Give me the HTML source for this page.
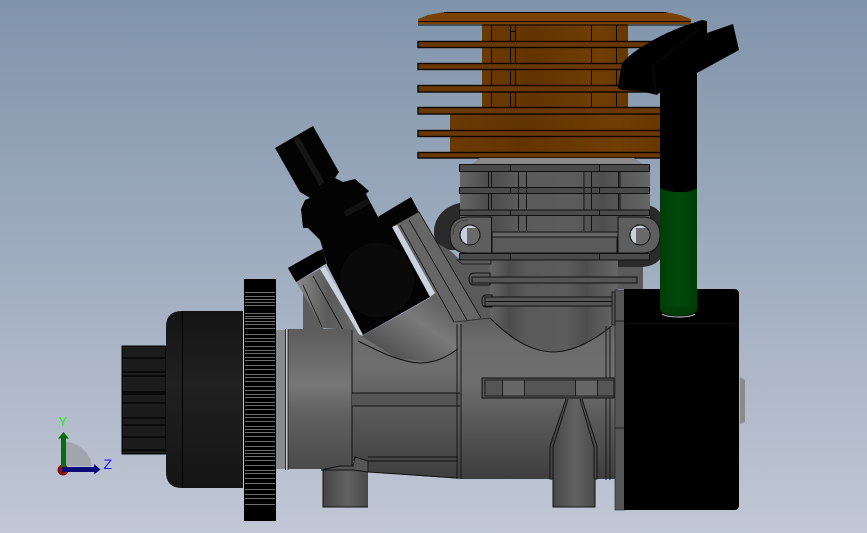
<!DOCTYPE html>
<html><head><meta charset="utf-8"><style>html,body{margin:0;padding:0;background:#a0abbd}svg{display:block}text{font-family:"Liberation Sans",sans-serif}</style></head><body>
<svg width="867" height="533" viewBox="0 0 867 533" xmlns="http://www.w3.org/2000/svg">
<defs>
<linearGradient id="bg" x1="0" y1="0" x2="0" y2="1"><stop offset="0" stop-color="#8094ab"/><stop offset="1" stop-color="#c1c7d5"/></linearGradient>
<linearGradient id="cu" x1="0" y1="0" x2="1" y2="0"><stop offset="0" stop-color="#6a3a03"/><stop offset=".35" stop-color="#623400"/><stop offset=".8" stop-color="#703e05"/><stop offset="1" stop-color="#673701"/></linearGradient>
<linearGradient id="body" x1="0" y1="0" x2="0" y2="1"><stop offset="0" stop-color="#5e5e5e"/><stop offset=".15" stop-color="#6c6c6c"/><stop offset=".4" stop-color="#6e6e6e"/><stop offset=".6" stop-color="#5c5c5c"/><stop offset="1" stop-color="#3e3e3e"/></linearGradient>
<linearGradient id="nose" x1="0" y1="0" x2="0" y2="1"><stop offset="0" stop-color="#5c5c5c"/><stop offset=".4" stop-color="#777"/><stop offset=".6" stop-color="#616161"/><stop offset="1" stop-color="#4a4a4a"/></linearGradient>
<linearGradient id="head" x1="0" y1="0" x2="1" y2="0"><stop offset="0" stop-color="#666"/><stop offset=".15" stop-color="#4c4c4c"/><stop offset=".3" stop-color="#5a5a5a"/><stop offset=".6" stop-color="#5c5c5c"/><stop offset=".75" stop-color="#4e4e4e"/><stop offset="1" stop-color="#666"/></linearGradient>
<linearGradient id="mount" x1="0" y1="0" x2="1" y2="0"><stop offset="0" stop-color="#444"/><stop offset=".55" stop-color="#626262"/><stop offset="1" stop-color="#484848"/></linearGradient>
<linearGradient id="clutch" x1="0" y1="0" x2="0" y2="1"><stop offset="0" stop-color="#141414"/><stop offset=".4" stop-color="#202020"/><stop offset="1" stop-color="#151515"/></linearGradient>
<linearGradient id="leg" x1="0" y1="0" x2="1" y2="0"><stop offset="0" stop-color="#8a8a8a"/><stop offset=".5" stop-color="#5a5a5a"/><stop offset="1" stop-color="#6a6a6a"/></linearGradient>
<linearGradient id="trump" x1="0" y1="1" x2="1" y2="0"><stop offset="0" stop-color="#404040"/><stop offset=".6" stop-color="#7a7a7a"/><stop offset="1" stop-color="#555"/></linearGradient>
<linearGradient id="green" x1="0" y1="0" x2="1" y2="0"><stop offset="0" stop-color="#003d06"/><stop offset=".5" stop-color="#004a0a"/><stop offset="1" stop-color="#003d06"/></linearGradient>
<clipPath id="h1"><circle cx="470" cy="235" r="10"/></clipPath>
<clipPath id="h2"><circle cx="640" cy="235" r="10"/></clipPath>
</defs>
<rect width="867" height="533" fill="url(#bg)"/>

<!-- copper cylinder -->
<rect x="482" y="24" width="146" height="84" fill="url(#cu)"/>
<rect x="450" y="113" width="210" height="41" fill="url(#cu)"/>
<path d="M418 24V19L428 15 444 12H666L680 15 691 19V24Z" fill="#7a4204"/>
<g fill="none" stroke="#0a0500" stroke-width="1"><path d="M444 12.500H666M418 21.500H691M418 25H691"/></g>
<g fill="#6a3802" stroke="#0a0500" stroke-width="1.400">
<rect x="418" y="41.500" width="250" height="6"/>
<rect x="418" y="63.500" width="250" height="6"/>
<rect x="418" y="85.500" width="250" height="6.500"/>
<rect x="418" y="107.500" width="250" height="6.500"/>
<rect x="418" y="130.500" width="250" height="6"/>
<rect x="418" y="152.500" width="250" height="5.500"/>
</g>
<g stroke="#0a0500" stroke-width="1"><path d="M491.500 25V41M491.500 48V63M491.500 70V85M491.500 92V107M510.500 25V41M510.500 48V63M510.500 70V85M510.500 92V107M515.500 25V41M515.500 48V63M515.500 70V85M515.500 92V107M510 31.500H515M591.500 25V41M591.500 48V63M591.500 70V85M591.500 92V107M616.500 25V41M616.500 48V63M616.500 70V85M616.500 92V107"/></g>

<!-- head transition -->
<path d="M470 165L480 158H634L644 165Z" fill="#8a8a8a"/>

<!-- dark arcs behind ears -->
<path d="M460 203C444 206 434 218 434 232 434 240 436 246 440 250H460Z" fill="#2a2a2a"/>
<path d="M640 204C652 204 660 210 662 216V255C660 262 652 267 640 267H618V255Z" fill="#2a2a2a"/>

<!-- grey behind, between carb leg and crankcase -->
<path d="M425 232L437 243 452 252 462 262H492V326H482Z" fill="#5a5a5a"/>

<!-- crankcase upper -->
<rect x="615" y="267" width="28" height="22" fill="#5a5a5a"/>
<rect x="490" y="258" width="128" height="100" fill="url(#head)"/>

<!-- head block -->
<rect x="460" y="165" width="190" height="95" fill="url(#head)"/>
<g fill="#4a4a4a" stroke="#111" stroke-width="1"><rect x="459.500" y="164.500" width="190" height="7"/><rect x="459.500" y="187.500" width="190" height="6"/><rect x="459.500" y="210" width="190" height="5.500"/><rect x="459.500" y="253.500" width="190" height="6.500"/></g>
<path d="M491.500 172V187M491.500 194V210M488.500 172V187M488.500 194V210M518.500 172V210M526.500 172V210M518.500 216V231M526.500 216V231M584 172V210M591.500 172V210M584 216V231M591.500 216V231M618.500 172V187M618.500 194V210M620 172V187M620 194V210M510.500 164V171M510.500 187V193M510.500 210V215M510.500 253V260M599.500 164V171M599.500 187V193M599.500 210V215M599.500 253V260" stroke="#111" stroke-width="1"/>
<path d="M492 232H618V237H492Z" fill="#666" stroke="#111"/>
<rect x="492" y="237" width="125" height="16" fill="#5a5a5a" stroke="#111"/>

<!-- ears -->
<path d="M468 217H491.500V253H468Q450 253 450 235 450 217 468 217Z" fill="#5e5e5e" stroke="#111"/>
<path d="M453 235Q453 220 468 220" fill="none" stroke="#222" stroke-width=".6"/>
<path d="M618 217H642Q660 217 660 235 660 253 642 253H618Z" fill="#5e5e5e" stroke="#111"/>
<circle cx="470" cy="235" r="10" fill="#c8d0dc" stroke="#111"/>
<rect x="467" y="228" width="14" height="18" fill="#6a6a6a" clip-path="url(#h1)"/>
<circle cx="640" cy="235" r="10" fill="#c8d0dc" stroke="#111"/>
<rect x="636" y="228" width="15" height="18" fill="#6a6a6a" clip-path="url(#h2)"/>
<circle cx="470" cy="235" r="10" fill="none" stroke="#111"/>
<circle cx="640" cy="235" r="10" fill="none" stroke="#111"/>

<!-- collar below head -->
<path d="M457 260H491V264H462Z" fill="#5a5a5a" stroke="#111" stroke-width=".8"/>

<!-- screws -->
<path d="M490 273H474Q469 273 469 279 469 285 474 285H490Z" fill="#5a5a5a" stroke="#111"/>
<rect x="472" y="277" width="165" height="6" fill="#555" stroke="#111"/>
<path d="M492 295H486Q482 295 482 301 482 307 486 307H492Z" fill="#5a5a5a" stroke="#111"/>
<rect x="485" y="297" width="130" height="9" fill="#555" stroke="#111"/>
<path d="M485 301.500H615" stroke="#111"/>

<!-- left tube behind -->
<path d="M303 293V330H324L312 300Z" fill="#5c5c5c"/>

<!-- carb legs -->
<path d="M296 282L320 269 360 335 351 330 322 328 303 293Z" fill="url(#leg)"/>
<path d="M303 285L322 327M313 276L343 330" stroke="#111" stroke-width=".8" fill="none"/>
<path d="M320 269L325 267 364 333 360 336Z" fill="#c9d2de"/>
<path d="M392 227L419 212 481 318 453 326 430 297Z" fill="#666"/>
<path d="M400 225L454 322M409 220L467 320M419 212L481 318" stroke="#111" stroke-width=".8" fill="none"/>
<path d="M392 227L397 225 435 293 430 297Z" fill="#c9d2de"/>

<!-- body sections -->
<rect x="276" y="330" width="10" height="139" fill="#8a8a8a"/>
<rect x="286" y="329" width="2" height="140" fill="#c8ccd4"/>
<rect x="288" y="329" width="65" height="140" fill="url(#nose)"/>
<path d="M285.500 329V470M288 329V470" stroke="#111" stroke-width=".8"/>
<path d="M351 329L362 336 435 296 453 323 462 322V479L368 472 352 460Z" fill="url(#body)"/>
<path d="M362 336L435 295 455 328 458 348 430 362 396 358Z" fill="url(#trump)"/>
<path d="M358 341C380 352 400 362 420 363 436 363 448 356 458 349" fill="none" stroke="#111" stroke-width="1"/>
<path d="M352 330V470M368 457H458M368 461H458M368 472L458 478" stroke="#111" stroke-width="1" fill="none"/>
<rect x="352" y="393" width="108" height="13" fill="#555"/>
<path d="M352 393H460M352 406H460" stroke="#111"/>

<path d="M460 322L490 318C510 340 530 352 552 352 574 352 594 340 612 326H620V479H460Z" fill="url(#body)"/>
<path d="M490 318C510 338 530 351 552 352 574 352 594 340 612 326" fill="none" stroke="#111" stroke-width="1"/>
<path d="M455 322L490 318" stroke="#333" stroke-width="1"/>
<path d="M457 324V479M461 324V479M610 326V480M606 326V480" fill="none" stroke="#111" stroke-width=".9"/>

<!-- side rail -->
<rect x="482" y="378" width="132" height="20" fill="#555" stroke="#111"/>
<rect x="503" y="380" width="21" height="16" fill="#666"/><rect x="576" y="380" width="21" height="16" fill="#666"/>
<path d="M485 380H614V396H485ZM502.500 380V396M524.500 380V396M575.500 380V396M597.500 380V396" fill="none" stroke="#111" stroke-width=".8"/>

<!-- mounts -->
<rect x="323" y="469" width="45" height="38" fill="url(#mount)"/>
<path d="M323 470V507H368" fill="none" stroke="#111" stroke-width="1"/>
<path d="M321 470L340 466 353 466 355 457 368 461V472L353 470 323 470Z" fill="#555" stroke="#111" stroke-width=".9"/>
<path d="M566 399H582L597 447V479H595V507H553V479H550V447Z" fill="url(#mount)"/>
<path d="M566 399L550 446V479H553V507H595V479H597V446L582 399M568 399L553 447V479M580 399L594 447V479" fill="none" stroke="#111" stroke-width="1"/>

<!-- back plate and cover -->
<rect x="615" y="290" width="10" height="220" fill="#555" stroke="#222" stroke-width=".6"/>
<path d="M615 321H624M615 428H624" stroke="#111" stroke-width=".8"/>
<path d="M612 292H615V325H612Z" fill="#555" stroke="#111" stroke-width=".8"/>
<path d="M624 289H734Q739 289 739 294V505Q739 510 734 510H624Z" fill="#000"/>
<path d="M626 323.500H735" stroke="#0e0e0e" stroke-width="1"/>
<path d="M740 377L745 380V422L740 424Z" fill="#8a8a8a"/>

<!-- pipe -->
<rect x="660" y="180" width="37" height="130" fill="url(#green)"/>
<path d="M660 310C664 318 693 318 697 310V307H660Z" fill="#003d06"/>
<path d="M662 314C668 318 690 318 695 314" stroke="#c9ced8" stroke-width="1" fill="none"/>
<path d="M660 60H697V188C690 194 668 193 660 188Z" fill="#000"/>
<path d="M622 63C632 52 642 47 650 42 665 33 680 27 702 20L707 21 707 33 733 24 739 50 697 73 659 93 657 95 640 91 622 90 618 88 619 80Z" fill="#000"/>
<path d="M653 66L700 28M653 66L656 93" stroke="#0e0e0e" stroke-width="1" fill="none"/>

<!-- carb black -->
<path d="M275 148L313 126 339 172 335 178 343 182 355 179 369 191 366 194 378 217 381 215 411 197 419 212 392 227 430 297 363 335 327 265 323 249 318 251 288 268 296 282 327 263 320 240 308 228 303 228 301 209 305 200 310 198 300 192Z" fill="#030303"/>
<path d="M288 268L318 251 327 263 296 282Z" fill="#000"/>
<path d="M296 138L322 184" stroke="#161616" stroke-width="6"/>
<path d="M345 214L369 201" stroke="#111" stroke-width="6"/>
<circle cx="377" cy="280" r="37" fill="#0a0a0a"/>

<!-- clutch -->
<path d="M122 346H166V454H122Z" fill="#1c1c1c" stroke="#000"/>
<path d="M122 358H166M122 372H166M122 376H166M122 392H166M122 394H166M122 403H166M122 418H166M122 425H166M122 437H166M122 450H166" stroke="#000" stroke-width="1.200"/>
<path d="M182 311H244V488H182Q166 488 166 472V327Q166 311 182 311Z" fill="url(#clutch)"/>
<path d="M182.500 311V488" stroke="#000" stroke-width="1"/>

<!-- gear -->
<rect x="244" y="279" width="32" height="242" fill="#000"/>
<line x1="260" y1="292" x2="260" y2="510" stroke="#6e6e6e" stroke-width="30" stroke-dasharray="1 3 1 2 1 2 1 2 1 7 1 2 1 1 1 2 1 2 1 3 1 5 1 3 1 2 1 4 1 3 1 2 1 3 1 2 1 4 1 3 1 4 1 2 1 3 1 4 1 3 1 3 1 2 1 4 1 2 1 3 1 4 1 2 1 3 1 4 1 2 1 2 1 3 1 4 1 4 1 3 1 2 1 2 1 3 1 4 1 4 1 2 1 4 1 4 1 5 1 4 1 3 1 5 1 5 1 4 1 4"/>
<path d="M243.500 311V488" stroke="#c4cad6" stroke-width="1"/>

<!-- triad -->
<path d="M63 466V441C80 443 90 453 92 466Z" fill="#a1a5ae"/>
<circle cx="63" cy="470" r="5.500" fill="#8c0d0d"/>
<rect x="61" y="438" width="5" height="30" fill="#0c6a12"/>
<path d="M58 438.500L63.500 432 69 438.500Z" fill="#0c6a12"/>
<rect x="62" y="467" width="32" height="5" fill="#0b0b78"/>
<path d="M94 464L100.500 469.500 94 474.500Z" fill="#0b0b78"/>
<text x="58.500" y="426" font-size="13" fill="#22ee22">Y</text>
<text x="103.500" y="469" font-size="14" fill="#1a1aff">Z</text>
</svg>
</body></html>
